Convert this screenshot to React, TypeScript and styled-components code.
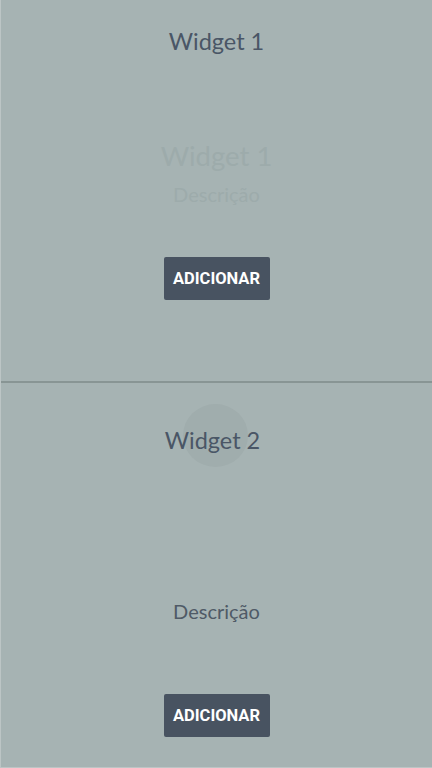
import React from "react";
import styled, { createGlobalStyle } from "styled-components";

const Global = createGlobalStyle`
  html, body { margin: 0; padding: 0; background: #bcc5c5; }
  body { font-family: Lato, "Noto Sans", sans-serif; }
  * { box-sizing: border-box; }
`;

const Page = styled.main`
  margin-left: 1px;
  width: 431px;
  height: 767px;
  background: #a6b3b3;
  display: flex;
  flex-direction: column;
`;

const Panel = styled.section<{ $h: number }>`
  height: ${(p) => p.$h}px;
  display: flex;
  flex-direction: column;
  align-items: center;
  position: relative;
`;

const Divider = styled.hr`
  margin: 0;
  border: none;
  height: 2px;
  background: #889594;
  width: 100%;
`;

const Title = styled.h2<{ $top: number; $shift?: number }>`
  margin: ${(p) => p.$top}px ${(p) => p.$shift ?? 0}px 0 0;
  font-family: Lato, sans-serif;
  font-weight: 400;
  font-size: 23.5px;
  line-height: 28px;
  color: #4a5666;
  position: relative;
  z-index: 1;
`;

const Ghost = styled.div`
  margin-top: 83px;
  display: flex;
  flex-direction: column;
  align-items: center;
  color: #9dabab;
`;

const GhostTitle = styled.div`
  font-family: Lato, sans-serif;
  font-size: 27.5px;
  line-height: 36px;
`;

const Desc = styled.p<{ $color: string; $top: number }>`
  margin: ${(p) => p.$top}px 0 0;
  font-family: Lato, sans-serif;
  font-size: 20px;
  line-height: 24px;
  color: ${(p) => p.$color};
`;

const Button = styled.button<{ $top: number }>`
  margin-top: ${(p) => p.$top}px;
  width: 106px;
  height: 43px;
  border: none;
  border-radius: 2px;
  background: #485361;
  color: #ffffff;
  font-family: Roboto, "Liberation Sans", sans-serif;
  font-weight: 700;
  font-size: 16.5px;
  letter-spacing: 0;
  padding: 0;
  cursor: pointer;
`;

const Ripple = styled.span`
  position: absolute;
  left: 182px;
  top: 21px;
  width: 65px;
  height: 63px;
  border-radius: 50%;
  background: #a0adad;
  z-index: 0;
`;

export default function App() {
  return (
    <>
      <Global />
      <Page>
        <Panel $h={381}>
          <Title $top={27}>Widget 1</Title>
          <Ghost>
            <GhostTitle>Widget 1</GhostTitle>
            <Desc $color="#9dabab" $top={8}>Descrição</Desc>
          </Ghost>
          <Button $top={51}>ADICIONAR</Button>
        </Panel>
        <Divider />
        <Panel $h={384}>
          <Ripple />
          <Title $top={43} $shift={8}>Widget 2</Title>
          <Desc $color="#4f5a66" $top={145}>Descrição</Desc>
          <Button $top={71}>ADICIONAR</Button>
        </Panel>
      </Page>
    </>
  );
}
